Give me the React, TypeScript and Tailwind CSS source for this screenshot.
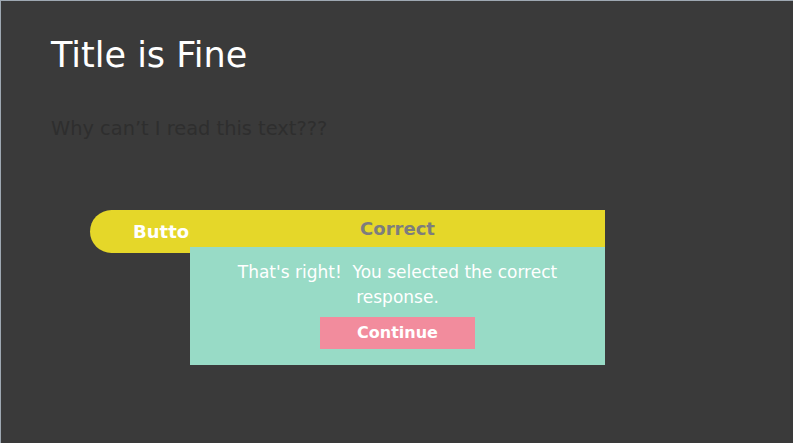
import React from "react";

const FONT = "font-['DejaVu_Sans',_'Liberation_Sans',_sans-serif]";

const Feedback = () => {
  return (
    <div className="absolute left-[100px] top-0 w-[415px] z-10">
      <div className="h-[37px] bg-[#e5d729] flex items-center justify-center">
        <span className="text-[18px] font-bold text-[#7d7d7d]">Correct</span>
      </div>
      <div className="bg-[#98dbc6] px-[20px] pt-[13px] pb-[16px] flex flex-col items-center">
        <p className="text-[17px] leading-[25px] text-white text-center whitespace-pre-wrap">
          {"That's right!  You selected the correct response."}
        </p>
        <button className="mt-[7px] w-[155px] h-[32px] bg-[#f28c9d] text-white text-[16px] font-bold">
          Continue
        </button>
      </div>
    </div>
  );
};

export default function App() {
  return (
    <div
      className={`${FONT} w-full h-[443px] bg-[#3a3a3a] border-l border-t border-[#9ea8b2] pl-[50px] pt-[34px] overflow-hidden`}
    >
      <h1 className="text-[35px] leading-[40px] text-white">Title is Fine</h1>
      <p className="mt-[42px] text-[19.4px] leading-[24px] text-[#2e2e2e]">
        Why can’t I read this text???
      </p>

      <div className="relative mt-[69px] ml-[39px]">
        <button className="w-[160px] h-[43px] rounded-full bg-[#e5d729] text-white text-[18px] font-bold text-left pl-[43px]">
          Button
        </button>
        <Feedback />
      </div>
    </div>
  );
}
